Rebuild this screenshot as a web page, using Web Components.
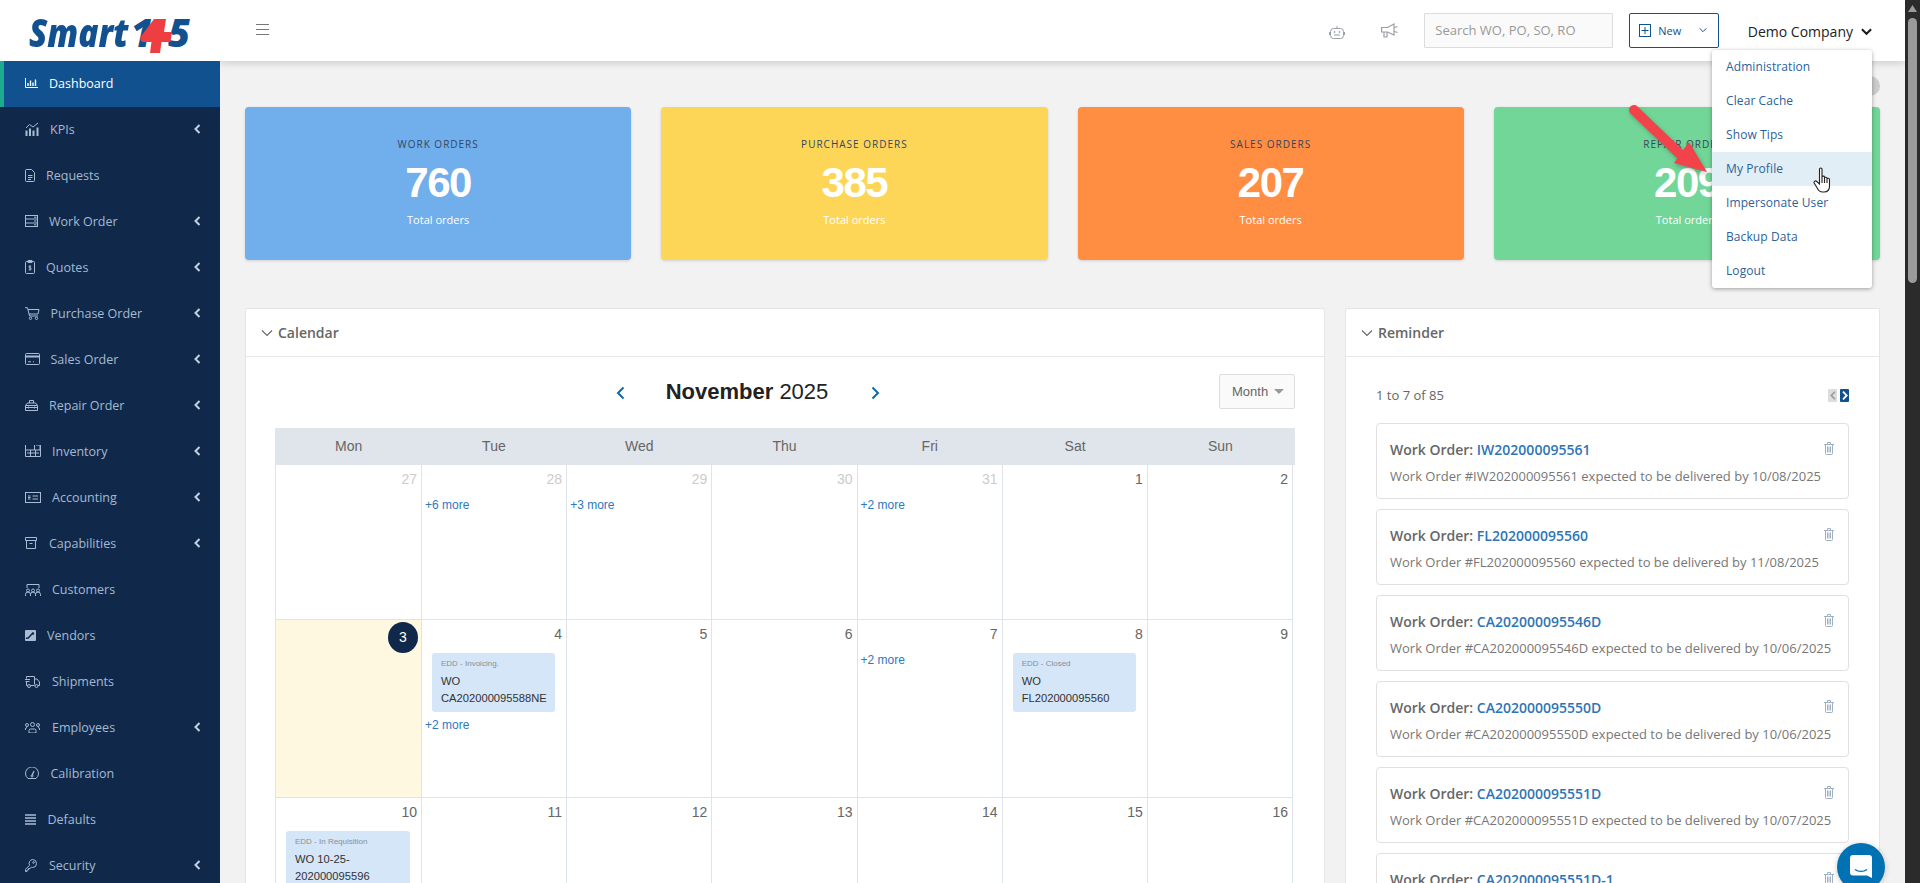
<!DOCTYPE html>
<html lang="en">
<head>
<meta charset="utf-8">
<title>Smart 145 Dashboard</title>
<style>
html, body { margin: 0; height: 883px; overflow: hidden; background: #f2f2f2; font-family: "Open Sans", sans-serif; }
#app { display: flex; width: 1920px; height: 883px; overflow: hidden; position: relative; }
</style>
</head>
<body>
<div id="app">
  <side-bar>
    <side-item icon="dashboard" w="24" active>Dashboard</side-item>
    <side-item icon="kpi" w="25" more>KPIs</side-item>
    <side-item icon="request" w="21">Requests</side-item>
    <side-item icon="workorder" w="24" more>Work Order</side-item>
    <side-item icon="quote" w="21" more>Quotes</side-item>
    <side-item icon="cart" w="25.5" more>Purchase Order</side-item>
    <side-item icon="card" w="25.5" more>Sales Order</side-item>
    <side-item icon="toolbox" w="24" more>Repair Order</side-item>
    <side-item icon="warehouse" w="27" more>Inventory</side-item>
    <side-item icon="bill" w="27" more>Accounting</side-item>
    <side-item icon="archive" w="24" more>Capabilities</side-item>
    <side-item icon="customers" w="27">Customers</side-item>
    <side-item icon="vendor" w="22">Vendors</side-item>
    <side-item icon="truck" w="27">Shipments</side-item>
    <side-item icon="people" w="27" more>Employees</side-item>
    <side-item icon="gauge" w="25.5">Calibration</side-item>
    <side-item icon="lines" w="22.5">Defaults</side-item>
    <side-item icon="key" w="24" more>Security</side-item>
  </side-bar>
  <main-col>
    <top-bar></top-bar>
    <stat-row>
      <stat-card title="Work Orders" value="760" color="#70aeec"></stat-card>
      <stat-card title="Purchase Orders" value="385" color="#fed657"></stat-card>
      <stat-card title="Sales Orders" value="207" color="#ff8d42"></stat-card>
      <stat-card title="Repair Orders" value="209" color="#72d698"></stat-card>
    </stat-row>
    <panel-row>
      <panel-box title="Calendar"><cal-month></cal-month></panel-box>
      <panel-box title="Reminder">
        <reminder-list>
          <reminder-card code="IW202000095561" date="10/08/2025"></reminder-card>
          <reminder-card code="FL202000095560" date="11/08/2025"></reminder-card>
          <reminder-card code="CA202000095546D" date="10/06/2025"></reminder-card>
          <reminder-card code="CA202000095550D" date="10/06/2025"></reminder-card>
          <reminder-card code="CA202000095551D" date="10/07/2025"></reminder-card>
          <reminder-card code="CA202000095551D-1" date="10/07/2025"></reminder-card>
        </reminder-list>
      </panel-box>
    </panel-row>
  </main-col>
  <fake-scrollbar></fake-scrollbar>
  <tour-overlay></tour-overlay>
</div>

<script>
// sidebar icons, each one is [width, height, svg content]
const ICONS = {
  dashboard: [13, 10, '<path d="M.5 0v9.5H13"/><path d="M3 5v3M5.5 2.5V8M8 4.5V8M10.5 1.5V8" stroke-width="1.4"/>'],
  kpi: [15, 14, '<path d="M1 6l3.5-3.5L8 5l5-4"/><path d="M1.5 8.5V14M5 6.5V14M8.5 8.5V14M12.5 5.5V14" stroke-width="2"/>'],
  request: [10, 13, '<path d="M1.5.5h5l3 3v8a1 1 0 0 1-1 1h-7a1 1 0 0 1-1-1v-10a1 1 0 0 1 1-1z"/><path d="M3 6.5h4.5M3 8.5h4.5M3 10.5h3"/>'],
  workorder: [13, 12, '<rect x=".5" y=".5" width="12" height="11"/><path d="M.5 4h12M.5 8h12M9 2.2h2.5M9 6h2.5M9 9.8h2.5"/>'],
  quote: [10, 14, '<path d="M1.5 1.5h7a1 1 0 0 1 1 1v10a1 1 0 0 1-1 1h-7a1 1 0 0 1-1-1v-10a1 1 0 0 1 1-1z"/><path d="M3 .5h4v2H3zM6.2 6.5c-.5-.8-2.4-.7-2.4.4 0 1.300 2.500.7 2.500 2 0 1.100-2 1.200-2.600.4M5 5.500v5"/>'],
  cart: [15, 13, '<path d="M0 .7h2.500l2 8.300h8.500M3 2.500h11l-1 4.500H4"/><circle cx="5.500" cy="11.300" r="1.200"/><circle cx="11.500" cy="11.300" r="1.200"/>'],
  card: [15, 12, '<rect x=".5" y=".5" width="14" height="11" rx="1"/><path d="M.5 3.500h14" stroke-width="2"/><path d="M3 8.800h3M8 8.800h1"/>'],
  toolbox: [13, 11, '<path d="M.5 5.500h12v5h-12zM.5 5.500l2-2.500h8l2 2.500M4.500 3V.5h4V3M.5 7.500h12M3.500 6.500v2M9.500 6.500v2"/>'],
  warehouse: [16, 12, '<path d="M.5 0v11.500h15V0M.5 5h9V0M9.500 5h6M5.500 5v6.500M10.500 5v6.500M2 8h12M11 0h4v5"/>'],
  bill: [16, 11, '<rect x=".5" y=".5" width="15" height="10"/><path d="M3 5.500h2.500M7.500 4h5.500M7.500 7h5.500" /><path d="M3 4h2.500M3 7h2.500"/>'],
  archive: [12, 12, '<path d="M.5.500h11v3h-11zM1.500 3.500v8h9v-8M4.500 6.500h3"/>'],
  customers: [16, 13, '<path d="M2 5V1.500h12V5"/><circle cx="3" cy="7.500" r="1.500"/><circle cx="8" cy="7.500" r="1.500"/><circle cx="13" cy="7.500" r="1.500"/><path d="M.5 13v-1.500a2 2 0 0 1 5 0V13M5.500 13v-1.500a2 2 0 0 1 5 0V13M10.500 13v-1.500a2 2 0 0 1 5 0V13"/>'],
  vendor: [11, 11, '<rect width="11" height="11" rx="1" fill="#a9bcd4" stroke="none"/><path d="M1 8c2 1 3-1 4-2l3-3" stroke="#10294a" stroke-width="1.500"/><circle cx="8" cy="3.500" r="1.200" fill="#10294a" stroke="none"/>'],
  truck: [15, 13, '<path d="M9.500 9.500V1.500h-8v2M9.500 4h2.500l2.500 3v3.500h-1.500M1.500 7v3.500h1M5.500 10.500h4M0 4.500h5M.5 6.500h4"/><circle cx="4" cy="11" r="1.500"/><circle cx="11.500" cy="11" r="1.500"/>'],
  people: [15, 11, '<circle cx="7.500" cy="2.500" r="2"/><circle cx="2" cy="3" r="1.500"/><circle cx="13" cy="3" r="1.500"/><path d="M4 11V8.500a1.500 1.500 0 0 1 1.500-1.500h4A1.500 1.500 0 0 1 11 8.500V11zM.5 8V7a1.500 1.500 0 0 1 1.500-1.500M14.500 8V7A1.500 1.500 0 0 0 13 5.500"/>'],
  gauge: [14, 12, '<path d="M3 11.500A6.500 6.500 0 1 1 11 11.500z"/><path d="M7 8.500l2-4.500" stroke-width="1.300"/><circle cx="7" cy="9" r="1"/>'],
  lines: [11, 11, '<path d="M0 1h11M0 4h11M0 7h11M0 10h11" stroke-width="1.600"/>'],
  key: [12, 13, '<path d="M7.500.5a4 4 0 0 1 0 8 4 4 0 0 1-1.200-.2L5 9.500H3.500V11H2v1.500H.5v-2.200l4-4A4 4 0 0 1 7.500.5z"/><circle cx="8.500" cy="3.500" r=".8"/>']
};

const chevronDown = (size, color, sw) => `<svg width="${size}" height="${size}" viewBox="0 0 12 12" fill="none" stroke="${color}" stroke-width="${sw}"><path d="M1 3.500l5 5 5-5"/></svg>`;

class SideBar extends HTMLElement {
  constructor() {
    super();
    this.attachShadow({ mode: 'open' }).innerHTML = `
    <style>
      :host { display: block; width: 220px; flex: none; height: 883px; background: #10294a; overflow: hidden; position: relative; z-index: 3; }
      .logo { height: 61px; background: #fff; position: relative; overflow: hidden; }
      .word { position: absolute; top: 10px; font: italic 800 38px/44px "Open Sans", sans-serif; color: #12518f; transform-origin: left center; }
      svg { position: absolute; left: 140px; top: 18px; }
    </style>
    <div class="logo">
      <span class="word" style="left:29px; transform: scaleX(.88)">Smart</span>
      <span class="word" style="left:131px">1</span>
      <span class="word" style="left:168px">5</span>
      <svg width="33" height="36" viewBox="0 0 33 36" fill="#ef3e42"><path d="M14 1h12l-2 13h8l-1.500 10h-9l-1.500 11H10l1.500-11H3C0 24-.5 20 2 17z"/></svg>
    </div>
    <slot></slot>`;
  }
}
customElements.define('side-bar', SideBar);

class SideItem extends HTMLElement {
  constructor() {
    super();
    const [w, h, body] = ICONS[this.getAttribute('icon')];
    const active = this.hasAttribute('active');
    this.attachShadow({ mode: 'open' }).innerHTML = `
    <style>
      :host { display: flex; align-items: center; height: 46px; padding: 0 19px 2px 25px; font-size: 12.500px; color: #a6b9d2; box-sizing: border-box; }
      :host([active]) { background: #115190; color: #fff; border-left: 4px solid #1cab8e; padding-left: 21px; }
      .ic { display: flex; flex: none; width: ${this.getAttribute('w')}px; }
      .label { flex: 1; }
      .arrow { display: flex; }
    </style>
    <span class="ic"><svg width="${w}" height="${h}" viewBox="0 0 ${w} ${h}" fill="none" stroke="${active ? '#fff' : '#a9bcd4'}" stroke-width="1">${body}</svg></span>
    <span class="label"><slot></slot></span>
    ${this.hasAttribute('more') ? '<span class="arrow"><svg width="7" height="10" viewBox="0 0 7 10" fill="none" stroke="#c3d1e2" stroke-width="2"><path d="M5.500 1l-4 4 4 4"/></svg></span>' : ''}`;
  }
}
customElements.define('side-item', SideItem);

class MainCol extends HTMLElement {
  constructor() {
    super();
    this.attachShadow({ mode: 'open' }).innerHTML = `
    <style>
      :host { display: flex; flex-direction: column; flex: 1; min-width: 0; height: 883px; overflow: hidden; position: relative; }
      .dot { position: absolute; top: 76px; right: 25px; width: 20px; height: 20px; border-radius: 50%; background: #ccc; }
    </style>
    <span class="dot"></span>
    <slot></slot>`;
  }
}
customElements.define('main-col', MainCol);

class TopBar extends HTMLElement {
  constructor() {
    super();
    this.attachShadow({ mode: 'open' }).innerHTML = `
    <style>
      :host { display: flex; align-items: center; flex: none; height: 61px; background: #fff; box-shadow: 0 2px 8px rgba(0,0,0,.16); position: relative; z-index: 2; padding: 0 0 0 36px; box-sizing: border-box; }
      .burger { display: flex; margin-bottom: 2px; }
      .bot { margin-left: auto; margin-top: 2px; display: flex; }
      .horn { margin-left: 36px; display: flex; }
      .search { margin-left: 26px; margin-top: -1px; width: 189px; height: 35px; box-sizing: border-box; border: 1px solid #ddd; border-radius: 1px; background: #fafafa; color: #999; font-size: 13px; line-height: 33px; padding-left: 10px; white-space: nowrap; }
      .new { margin-left: 16px; margin-top: -1px; width: 90px; height: 35px; box-sizing: border-box; border: 1px solid #12518f; border-radius: 2px; display: flex; align-items: center; padding-left: 9px; color: #12518f; font-size: 11px; font-weight: 500; }
      .new span { margin-left: 7px; flex: 1; }
      .new .c { display: flex; margin-right: 11px; }
      user-menu { margin-left: 28.500px; margin-right: 33px; }
    </style>
    <span class="burger"><svg width="13" height="11" viewBox="0 0 13 11" stroke="#777" stroke-width="1"><path d="M0 .5h13M0 5.500h13M0 10.500h13"/></svg></span>
    <span class="bot"><svg width="16" height="14" viewBox="0 0 16 14" fill="none" stroke="#9aa0a7"><rect x="1.500" y="3.500" width="13" height="10" rx="3"/><path d="M8 3.500V1M.5 7v3M15.500 7v3M5 10h6" /><circle cx="5.500" cy="7" r=".6"/><circle cx="10.500" cy="7" r=".6"/></svg></span>
    <span class="horn"><svg width="17" height="15" viewBox="0 0 17 15" fill="none" stroke="#9aa0a7" stroke-width="1.200"><path d="M.6 4.500h6L13 1v11L6.600 9H.6zM3 9v5h3V9M13.500 4.500l3-1M13.500 8.500l3 1"/></svg></span>
    <span class="search">Search WO, PO, SO, RO</span>
    <span class="new"><svg width="12" height="13" viewBox="0 0 12 13" fill="none" stroke="#12518f"><rect x=".5" y=".5" width="11" height="12"/><path d="M6 3v7M2.500 6.500h7"/></svg><span>New</span><i class="c">${chevronDown(8, '#12518f', 1.500)}</i></span>
    <user-menu></user-menu>`;
  }
}
customElements.define('top-bar', TopBar);

class UserMenu extends HTMLElement {
  constructor() {
    super();
    const items = ['Administration', 'Clear Cache', 'Show Tips', 'My Profile', 'Impersonate User', 'Backup Data', 'Logout'];
    this.attachShadow({ mode: 'open' }).innerHTML = `
    <style>
      :host { display: flex; align-items: center; align-self: stretch; position: relative; font-size: 14px; color: #222; }
      .name { display: flex; align-items: center; gap: 8px; margin-top: 1px; }
      .menu { position: absolute; top: 50px; right: 0; width: 160px; background: #fff; border-radius: 3px; box-shadow: 0 1px 4px rgba(0,0,0,.35); overflow: hidden; }
      .menu div { height: 34px; line-height: 34px; padding-left: 14px; font-size: 12px; letter-spacing: .1px; color: #2c6299; }
      .menu .on { background: #e2eef6; }
    </style>
    <span class="name">Demo Company ${chevronDown(11, '#1a1a1a', 2.200)}</span>
    <div class="menu">${items.map(t => `<div class="${t === 'My Profile' ? 'on' : ''}">${t}</div>`).join('')}</div>`;
  }
}
customElements.define('user-menu', UserMenu);

class StatRow extends HTMLElement {
  constructor() {
    super();
    this.attachShadow({ mode: 'open' }).innerHTML = `
    <style>:host { display: grid; grid-template-columns: repeat(4, 1fr); gap: 30px; flex: none; margin: 46px 25px 48px; }</style>
    <slot></slot>`;
  }
}
customElements.define('stat-row', StatRow);

class StatCard extends HTMLElement {
  constructor() {
    super();
    this.attachShadow({ mode: 'open' }).innerHTML = `
    <style>
      :host { display: flex; flex-direction: column; align-items: center; height: 153px; border-radius: 4px; background: ${this.getAttribute('color')}; box-shadow: 0 1px 3px rgba(0,0,0,.14); }
      .t { margin-top: 30px; font-size: 10px; line-height: 14px; letter-spacing: 1px; text-transform: uppercase; color: #33475f; }
      .v { margin-top: 10px; font: 700 42px/44px "Liberation Sans", sans-serif; letter-spacing: -1.500px; color: #fff; }
      .s { margin-top: 7px; font-size: 11px; line-height: 16px; color: #fff; }
    </style>
    <div class="t">${this.getAttribute('title')}</div>
    <div class="v">${this.getAttribute('value')}</div>
    <div class="s">Total orders</div>`;
  }
}
customElements.define('stat-card', StatCard);

class PanelRow extends HTMLElement {
  constructor() {
    super();
    this.attachShadow({ mode: 'open' }).innerHTML = `
    <style>:host { display: grid; grid-template-columns: 1fr 535px; gap: 20px; margin: 0 25px; align-items: start; }</style>
    <slot></slot>`;
  }
}
customElements.define('panel-row', PanelRow);

class PanelBox extends HTMLElement {
  constructor() {
    super();
    this.attachShadow({ mode: 'open' }).innerHTML = `
    <style>
      :host { display: block; background: #fff; border: 1px solid #e5e5e5; border-radius: 2px 2px 0 0; }
      .head { display: flex; align-items: center; gap: 5px; height: 48px; box-sizing: border-box; padding-left: 15px; border-bottom: 1px solid #e7e7e7; font-size: 14px; font-weight: 600; color: #666; }
      .head svg { display: block; }
    </style>
    <div class="head">${chevronDown(12, '#666', 1.100)}<span>${this.getAttribute('title')}</span></div>
    <slot></slot>`;
  }
}
customElements.define('panel-box', PanelBox);

class CalEvent extends HTMLElement {
  constructor() {
    super();
    const lines = this.getAttribute('lines').split('|');
    this.attachShadow({ mode: 'open' }).innerHTML = `
    <style>
      :host { display: block; margin: 0 11px 3px 10px; padding: 6px 4px 5px 9px; height: 59px; box-sizing: border-box; background: #d4e6f8; border-radius: 3px; }
      .l { font-size: 8px; line-height: 10px; color: #8b8f96; margin-bottom: 4px; white-space: nowrap; }
      .w { font-size: 11.200px; line-height: 17px; color: #333; white-space: nowrap; }
    </style>
    <div class="l">${this.getAttribute('label')}</div>
    ${lines.map(t => `<div class="w">${t}</div>`).join('')}`;
  }
}
customElements.define('cal-event', CalEvent);

class CalMonth extends HTMLElement {
  constructor() {
    super();
    const days = ['Mon', 'Tue', 'Wed', 'Thu', 'Fri', 'Sat', 'Sun'];
    // n: day number, off: other month, more: link text, ev: [label, lines]
    const cells = [
      { n: 27, off: 1 }, { n: 28, off: 1, more: 6 }, { n: 29, off: 1, more: 3 }, { n: 30, off: 1 }, { n: 31, off: 1, more: 2 }, { n: 1 }, { n: 2 },
      { n: 3, today: 1 }, { n: 4, ev: ['EDD - Invoicing.', 'WO|CA202000095588NE'], more: 2 }, { n: 5 }, { n: 6 }, { n: 7, more: 2 }, { n: 8, ev: ['EDD - Closed', 'WO|FL202000095560'] }, { n: 9 },
      { n: 10, ev: ['EDD - In Requisition', 'WO 10-25-|202000095596'] }, { n: 11 }, { n: 12 }, { n: 13 }, { n: 14 }, { n: 15 }, { n: 16 }
    ];
    const cellHtml = c => `
      <div class="cell ${c.today ? 'today' : ''}">
        <div class="num ${c.off ? 'off' : ''}">${c.today ? `<b>${c.n}</b>` : c.n}</div>
        ${c.ev ? `<cal-event label="${c.ev[0]}" lines="${c.ev[1]}"></cal-event>` : ''}
        ${c.more ? `<a>+${c.more} more</a>` : ''}
      </div>`;
    this.attachShadow({ mode: 'open' }).innerHTML = `
    <style>
      :host { display: block; padding: 17px 29px 0; font-family: "Liberation Sans", sans-serif; }
      .bar { display: flex; justify-content: space-between; align-items: center; height: 35px; margin-bottom: 19px; }
      .mid { display: flex; align-items: center; margin-left: 2px; padding-top: 2px; }
      .title { margin: -1px 43px 0 41px; font-size: 22px; color: #222; }
      .title b { font-weight: 700; }
      .mid svg { display: block; }
      .view { width: 76px; height: 35px; box-sizing: border-box; border: 1px solid #ddd; border-radius: 2px; background: #fafafa; display: flex; align-items: center; gap: 6px; padding-left: 12px; font-size: 13px; color: #666; }
      .view i { width: 0; height: 0; border: 5px solid transparent; border-top-color: #999; border-bottom: 0; }
      .head { display: grid; grid-template-columns: repeat(7, 1fr); height: 37px; background: #e0e5ec; padding: 0 2px 0 1px; line-height: 37px; text-align: center; font-size: 14px; color: #666; }
      .grid { display: grid; grid-template-columns: 146px repeat(6, 1fr); grid-template-rows: 155px 178px 178px; margin-right: 2px; border-left: 1px solid #dfe4ec; }
      .cell { border-right: 1px solid #dfe4ec; border-bottom: 1px solid #dfe4ec; box-sizing: border-box; min-width: 0; }
      .today { background: #fef8e0; }
      .num { height: 30px; padding: 4px 4px 0 0; box-sizing: border-box; line-height: 20px; text-align: right; font-size: 14px; color: #666; position: relative; }
      .num.off { color: #ccc; }
      .num b { position: absolute; right: 3px; top: 2px; width: 30px; height: 31px; border-radius: 50%; background: #10294a; color: #fff; font-weight: 400; line-height: 31px; text-align: center; }
      cal-event { margin-top: 3px; }
      a { display: block; padding-left: 3px; font-size: 12px; line-height: 20px; color: #2e78bd; }
    </style>
    <div class="bar">
      <span></span>
      <div class="mid">
        <svg width="9" height="14" viewBox="0 0 9 14" fill="none" stroke="#0f6aa8" stroke-width="2"><path d="M7.500 1.500L2 7l5.500 5.500"/></svg>
        <div class="title"><b>November</b> 2025</div>
        <svg width="9" height="14" viewBox="0 0 9 14" fill="none" stroke="#0f6aa8" stroke-width="2"><path d="M1.500 1.500L7 7l-5.500 5.500"/></svg>
      </div>
      <div class="view">Month <i></i></div>
    </div>
    <div class="head">${days.map(d => `<div>${d}</div>`).join('')}</div>
    <div class="grid">${cells.map(cellHtml).join('')}</div>`;
  }
}
customElements.define('cal-month', CalMonth);

class ReminderList extends HTMLElement {
  constructor() {
    super();
    this.attachShadow({ mode: 'open' }).innerHTML = `
    <style>
      :host { display: block; padding: 27px 30px 0; }
      .top { display: flex; align-items: center; justify-content: space-between; height: 22px; margin-bottom: 17px; font-size: 13px; color: #666; }
      .pager { display: flex; gap: 3px; }
      .pager span { display: flex; align-items: center; justify-content: center; width: 9px; height: 13px; border-radius: 1px; }
      .prev { background: #ddd; }
      .next { background: #12518f; }
    </style>
    <div class="top">
      <span>1 to 7 of 85</span>
      <div class="pager">
        <span class="prev"><svg width="6" height="9" viewBox="0 0 6 9" fill="none" stroke="#999" stroke-width="1.600"><path d="M5 .7L1.300 4.500 5 8.300"/></svg></span>
        <span class="next"><svg width="6" height="9" viewBox="0 0 6 9" fill="none" stroke="#fff" stroke-width="1.800"><path d="M1 .7l3.700 3.800L1 8.300"/></svg></span>
      </div>
    </div>
    <slot></slot>`;
  }
}
customElements.define('reminder-list', ReminderList);

class ReminderCard extends HTMLElement {
  constructor() {
    super();
    const code = this.getAttribute('code');
    this.attachShadow({ mode: 'open' }).innerHTML = `
    <style>
      :host { display: block; height: 76px; box-sizing: border-box; margin-bottom: 10px; padding: 16px 14px 0 13px; border: 1px solid #e0e0e0; border-radius: 4px; }
      .t { display: flex; justify-content: space-between; height: 20px; line-height: 20px; font-size: 14px; font-weight: 600; color: #666; }
      .t a { color: #2e75b5; }
      svg { margin-top: 2px; }
      .b { margin-top: 6px; font-size: 13px; line-height: 20px; color: #777; white-space: nowrap; }
    </style>
    <div class="t"><span>Work Order: <a>${code}</a></span>
      <svg width="10" height="13" viewBox="0 0 10 13" fill="none" stroke="#9fb0c3"><path d="M0 2.500h10M3.500 2V.5h3V2M1.500 2.500v9a1 1 0 0 0 1 1h5a1 1 0 0 0 1-1v-9M3.500 4.500v6M5 4.500v6M6.500 4.500v6"/></svg>
    </div>
    <div class="b">Work Order #${code} expected to be delivered by ${this.getAttribute('date')}</div>`;
  }
}
customElements.define('reminder-card', ReminderCard);

class FakeScrollbar extends HTMLElement {
  constructor() {
    super();
    this.attachShadow({ mode: 'open' }).innerHTML = `
    <style>
      :host { display: flex; flex-direction: column; align-items: center; flex: none; width: 15px; height: 883px; background: #2b2b2b; position: relative; z-index: 3; }
      svg { margin-top: 5px; }
      .thumb { margin-top: 6px; width: 9px; height: 265px; border-radius: 5px; background: #9b9b9b; }
    </style>
    <svg width="9" height="7" viewBox="0 0 9 7" fill="#9b9b9b"><path d="M4.500 0L9 7H0z"/></svg>
    <div class="thumb"></div>`;
  }
}
customElements.define('fake-scrollbar', FakeScrollbar);

// things lying over the page: the tutorial arrow, the mouse hand and the chat button
class TourOverlay extends HTMLElement {
  constructor() {
    super();
    this.attachShadow({ mode: 'open' }).innerHTML = `
    <style>
      :host { display: block; position: absolute; inset: 0; pointer-events: none; z-index: 5; }
      svg { position: absolute; }
      .arrow { left: 1620px; top: 96px; filter: drop-shadow(1px 2px 2px rgba(0,0,0,.25)); }
      .hand { left: 1813px; top: 167px; }
      .chat { position: absolute; left: 1837px; top: 843px; width: 48px; height: 48px; border-radius: 50%; background: #0071b2; box-shadow: 0 1px 6px rgba(0,0,0,.2); }
      .chat svg { left: 13px; top: 12px; }
    </style>
    <svg class="arrow" width="95" height="85" viewBox="0 0 95 85">
      <path d="M14 14L62 60" stroke="#f2434a" stroke-width="10" stroke-linecap="round"/>
      <path d="M87 76L54 67 69 46z" fill="#f2434a"/>
    </svg>
    <svg class="hand" width="20" height="26" viewBox="0 0 20 26" fill="#fff" stroke="#222" stroke-width="1.100">
      <path d="M6.500 2C6.500.6 9 .6 9 2v8c0-1.200 2.500-1.200 2.500 0v1c0-1 2.500-1 2.500.2v.8c0-1 2.500-1 2.500.5V19c0 3.500-2 6-5.500 6H9.500C7 25 5.500 23.500 4.500 21.500L1.200 16c-.7-1.500 1.300-2.800 2.600-1.500L6.500 17z"/>
      <path d="M9 10v6M11.500 11v5M14 12v4"/>
    </svg>
    <div class="chat"><svg width="22" height="24" viewBox="0 0 22 24"><path d="M3 0h16a3 3 0 0 1 3 3v20l-5-2.500H3a3 3 0 0 1-3-3V3a3 3 0 0 1 3-3z" fill="#fff"/><path d="M5 14.500c3.500 2.400 8.500 2.400 12 0" fill="none" stroke="#0071b2" stroke-width="1.500"/></svg></div>`;
  }
}
customElements.define('tour-overlay', TourOverlay);
</script>
</body>
</html>
